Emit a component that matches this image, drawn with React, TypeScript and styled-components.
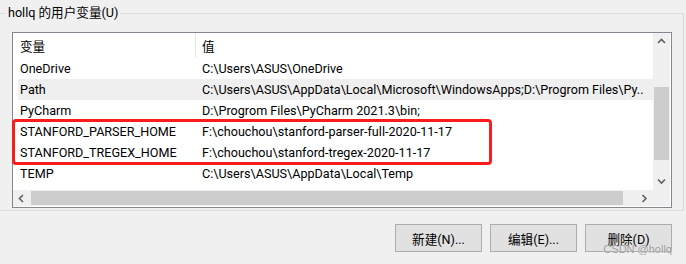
import React from "react";
import styled, { createGlobalStyle } from "styled-components";

const GlobalStyle = createGlobalStyle`
  * { box-sizing: border-box; }
  html, body { margin: 0; padding: 0; background: #f0f0f0; }
  body {
    font-family: "Microsoft YaHei UI", Roboto, "Noto Sans CJK SC", sans-serif;
    font-size: 12.6px;
    color: #000;
  }
`;

type EnvVar = { name: string; value: string; hover?: boolean };

const vars: EnvVar[] = [
  { name: "OneDrive", value: "C:\\Users\\ASUS\\OneDrive" },
  {
    name: "Path",
    value: "C:\\Users\\ASUS\\AppData\\Local\\Microsoft\\WindowsApps;D:\\Progrom Files\\Py..",
    hover: true,
  },
  { name: "PyCharm", value: "D:\\Progrom Files\\PyCharm 2021.3\\bin;" },
  { name: "STANFORD_PARSER_HOME", value: "F:\\chouchou\\stanford-parser-full-2020-11-17" },
  { name: "STANFORD_TREGEX_HOME", value: "F:\\chouchou\\stanford-tregex-2020-11-17" },
  { name: "TEMP", value: "C:\\Users\\ASUS\\AppData\\Local\\Temp" },
];

const Chevron = ({ dir }: { dir: "up" | "down" | "left" | "right" }) => {
  const pts = {
    up: "1,5 4.5,1.5 8,5",
    down: "1,1.5 4.5,5 8,1.5",
    left: "5,1 1.5,4.5 5,8",
    right: "1.5,1 5,4.5 1.5,8",
  }[dir];
  const vertical = dir === "up" || dir === "down";
  return (
    <svg width={vertical ? 9 : 7} height={vertical ? 7 : 9} viewBox={vertical ? "0 0 9 7" : "0 0 7 9"}>
      <polyline points={pts} fill="none" stroke="#606060" strokeWidth="1.6" />
    </svg>
  );
};

export default function App() {
  return (
    <>
      <GlobalStyle />
      <Window>
        <GroupBox>
          <GroupTitle>hollq 的用户变量(U)</GroupTitle>
          <ListBox>
            <ListArea>
              <HeaderRow>
                <HeaderCell $divider>变量</HeaderCell>
                <HeaderCell>值</HeaderCell>
              </HeaderRow>
              {vars.map((v) => (
                <Row key={v.name} $hover={v.hover}>
                  <Cell>{v.name}</Cell>
                  <Cell>{v.value}</Cell>
                </Row>
              ))}
            </ListArea>
            <VScroll>
              <ScrollButton>
                <Chevron dir="up" />
              </ScrollButton>
              <VThumb />
              <ScrollButton>
                <Chevron dir="down" />
              </ScrollButton>
            </VScroll>
            <HScroll>
              <ScrollButton>
                <Chevron dir="left" />
              </ScrollButton>
              <HThumb />
              <ScrollButton>
                <Chevron dir="right" />
              </ScrollButton>
            </HScroll>
            <Corner />
            <Highlight />
          </ListBox>
        </GroupBox>
        <Buttons>
          <Button>新建(N)...</Button>
          <Button>编辑(E)...</Button>
          <Button>删除(D)</Button>
        </Buttons>
        <Watermark>CSDN @hollq</Watermark>
      </Window>
    </>
  );
}

const Window = styled.div`
  position: relative;
  width: 686px;
  height: 264px;
  overflow: hidden;
  background: #f0f0f0;
`;

const GroupBox = styled.fieldset`
  margin: 4px 2px 0 -2px;
  padding: 10px 11px 2px 13px;
  border: 1px solid #dcdcdc;
  min-inline-size: auto;
`;

const GroupTitle = styled.legend`
  margin-left: -6px;
  padding: 0 2px;
  line-height: 18px;
  font-size: 12.6px;
`;

const ListBox = styled.div`
  position: relative;
  height: 176px;
  border: 1px solid #828790;
  background: #fff;
  padding: 0 1px 1px 0;
  display: grid;
  grid-template-columns: 1fr 17px;
  grid-template-rows: 1fr 16px;
`;

const ListArea = styled.div`
  grid-column: 1;
  grid-row: 1;
  overflow: hidden;
`;

const HeaderRow = styled.div`
  display: grid;
  grid-template-columns: 178px 1fr;
  height: 25px;
  margin-left: 5px;
`;

const HeaderCell = styled.div<{ $divider?: boolean }>`
  display: flex;
  align-items: center;
  padding-left: ${(p) => (p.$divider ? "2px" : "6px")};
  border-right: ${(p) => (p.$divider ? "1px solid #e5e5e5" : "none")};
`;

const Row = styled.div<{ $hover?: boolean }>`
  display: grid;
  grid-template-columns: 182px 1fr;
  height: 21px;
  margin-left: 5px;
  background: ${(p) => (p.$hover ? "#efefef" : "transparent")};
`;

const Cell = styled.div`
  padding-left: 2px;
  line-height: 21px;
  white-space: nowrap;
  overflow: hidden;
`;

const VScroll = styled.div`
  grid-column: 2;
  grid-row: 1;
  display: flex;
  flex-direction: column;
  background: #f0f0f0;
`;

const HScroll = styled.div`
  grid-column: 1;
  grid-row: 2;
  display: flex;
  background: #f0f0f0;
`;

const ScrollButton = styled.div`
  flex: 0 0 17px;
  display: flex;
  align-items: center;
  justify-content: center;
`;

const VThumb = styled.div`
  height: 73px;
  margin: 37px 1px auto;
  background: #cdcdcd;
`;

const HThumb = styled.div`
  width: 592px;
  margin: 1px auto 1px 1px;
  background: #cdcdcd;
`;

const Corner = styled.div`
  grid-column: 2;
  grid-row: 2;
  background: #f0f0f0;
`;

const Highlight = styled.div`
  position: absolute;
  left: -1px;
  top: 86px;
  width: 480px;
  height: 46px;
  border: 3px solid #fc1c1c;
  border-radius: 4px;
  pointer-events: none;
`;

const Buttons = styled.div`
  display: flex;
  justify-content: flex-end;
  gap: 8px;
  margin-top: 13px;
  padding-right: 14px;
`;

const Button = styled.button`
  width: 87px;
  height: 28px;
  border: 1px solid #adadad;
  background: #e1e1e1;
  font: inherit;
  color: #000;
  padding: 0;
`;

const Watermark = styled.div`
  position: absolute;
  right: 14px;
  top: 243px;
  font-family: "Liberation Sans", Arial, sans-serif;
  font-size: 11px;
  line-height: 12px;
  color: #9c9c9c;
  text-shadow: 0 0 1px rgba(255, 255, 255, 0.7);
`;
